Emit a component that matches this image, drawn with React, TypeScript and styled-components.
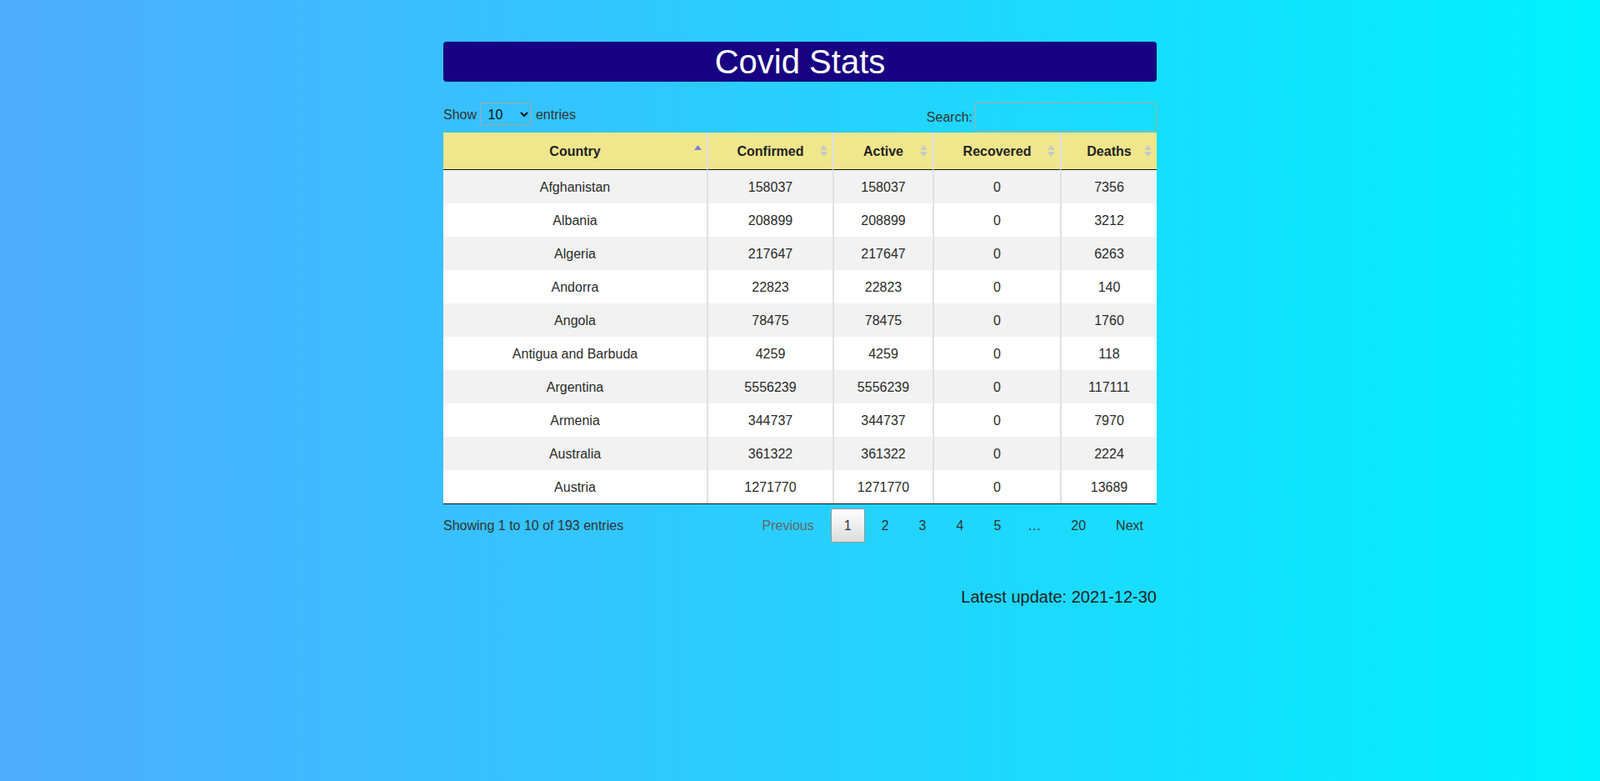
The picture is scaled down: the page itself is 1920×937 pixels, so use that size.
import React from "react";
import styled, { createGlobalStyle } from "styled-components";

interface CountryRow {
  country: string;
  confirmed: number;
  active: number;
  recovered: number;
  deaths: number;
}

const rows: CountryRow[] = [
  { country: "Afghanistan", confirmed: 158037, active: 158037, recovered: 0, deaths: 7356 },
  { country: "Albania", confirmed: 208899, active: 208899, recovered: 0, deaths: 3212 },
  { country: "Algeria", confirmed: 217647, active: 217647, recovered: 0, deaths: 6263 },
  { country: "Andorra", confirmed: 22823, active: 22823, recovered: 0, deaths: 140 },
  { country: "Angola", confirmed: 78475, active: 78475, recovered: 0, deaths: 1760 },
  { country: "Antigua and Barbuda", confirmed: 4259, active: 4259, recovered: 0, deaths: 118 },
  { country: "Argentina", confirmed: 5556239, active: 5556239, recovered: 0, deaths: 117111 },
  { country: "Armenia", confirmed: 344737, active: 344737, recovered: 0, deaths: 7970 },
  { country: "Australia", confirmed: 361322, active: 361322, recovered: 0, deaths: 2224 },
  { country: "Austria", confirmed: 1271770, active: 1271770, recovered: 0, deaths: 13689 },
];

const columns = [
  { label: "Country", width: 316, sorted: true },
  { label: "Confirmed", width: 151, sorted: false },
  { label: "Active", width: 120, sorted: false },
  { label: "Recovered", width: 153, sorted: false },
  { label: "Deaths", width: 116, sorted: false },
];

const pages = ["1", "2", "3", "4", "5", "…", "20"];

const SortIcon: React.FC<{ asc?: boolean }> = ({ asc }) => (
  <SortMark width="9" height="14" viewBox="0 0 9 14">
    {asc ? (
      <polygon points="4.5,0 9,6 0,6" fill="#7a7fd6" />
    ) : (
      <>
        <polygon points="4.5,0 9,6 0,6" fill="#c8c8c8" />
        <polygon points="0,8 9,8 4.5,14" fill="#c8c8c8" />
      </>
    )}
  </SortMark>
);

const App: React.FC = () => {
  return (
    <>
      <GlobalStyle />
      <Wrapper>
        <Title>Covid Stats</Title>
        <TopBar>
          <Label>
            Show{" "}
            <Select defaultValue="10">
              <option value="10">10</option>
              <option value="25">25</option>
              <option value="50">50</option>
              <option value="100">100</option>
            </Select>{" "}
            entries
          </Label>
          <Label>
            Search:
            <SearchInput type="search" />
          </Label>
        </TopBar>
        <Table>
          <colgroup>
            {columns.map((c) => (
              <col key={c.label} style={{ width: c.width }} />
            ))}
          </colgroup>
          <thead>
            <tr>
              {columns.map((c) => (
                <Th key={c.label}>
                  {c.label}
                  <SortIcon asc={c.sorted} />
                </Th>
              ))}
            </tr>
          </thead>
          <tbody>
            {rows.map((r, i) => (
              <Row key={r.country} odd={i % 2 === 0}>
                <Td>{r.country}</Td>
                <Td>{r.confirmed}</Td>
                <Td>{r.active}</Td>
                <Td>{r.recovered}</Td>
                <Td>{r.deaths}</Td>
              </Row>
            ))}
          </tbody>
        </Table>
        <BottomBar>
          <Info>Showing 1 to 10 of 193 entries</Info>
          <Pager>
            <PageButton disabled>Previous</PageButton>
            {pages.map((p) =>
              p === "…" ? (
                <Ellipsis key={p}>…</Ellipsis>
              ) : (
                <PageButton key={p} current={p === "1"}>
                  {p}
                </PageButton>
              )
            )}
            <PageButton>Next</PageButton>
          </Pager>
        </BottomBar>
        <Updated>Latest update: 2021-12-30</Updated>
      </Wrapper>
    </>
  );
};

export default App;

const GlobalStyle = createGlobalStyle`
  html, body {
    margin: 0;
    padding: 0;
  }
  body {
    min-height: 100vh;
    background: linear-gradient(to right, #4facfe 0%, #00f2fe 100%);
    font-family: "Liberation Sans", Arial, sans-serif;
    font-size: 16px;
    line-height: 23px;
    color: #333;
  }
`;

const Wrapper = styled.div`
  width: 856px;
  margin: 0 auto;
  padding-top: 50px;
`;

const Title = styled.h1`
  margin: 0;
  height: 48px;
  line-height: 48px;
  font-size: 40px;
  font-weight: normal;
  text-align: center;
  color: #fff;
  background-color: #170082;
  border-radius: 4px;
`;

const TopBar = styled.div`
  display: flex;
  justify-content: space-between;
  align-items: flex-start;
  margin-top: 25px;
  margin-bottom: 1px;
`;

const Label = styled.label`
  display: block;
  color: #333;
`;

const Select = styled.select`
  width: 62px;
  height: 28px;
  padding: 0 4px;
  font-family: inherit;
  font-size: 16px;
  color: #111;
  background-color: transparent;
  border: 1px solid #aaa;
  border-radius: 3px;
`;

const SearchInput = styled.input`
  box-sizing: border-box;
  width: 218px;
  height: 35px;
  margin-left: 3px;
  padding: 5px;
  font-family: inherit;
  font-size: 16px;
  background-color: transparent;
  border: 1px solid #aaa;
  border-radius: 3px;
  outline: none;
`;

const Table = styled.table`
  width: 100%;
  table-layout: fixed;
  border-collapse: separate;
  border-spacing: 0;
  border-bottom: 1px solid #111;
`;

const Th = styled.th`
  position: relative;
  padding: 11px 18px 10px;
  font-weight: bold;
  color: #222;
  text-align: center;
  background-color: #f0e68c;
  border-bottom: 1px solid #111;
  & + & {
    border-left: 2px solid #dde1e6;
  }
`;

const SortMark = styled.svg`
  position: absolute;
  right: 6px;
  top: 50%;
  margin-top: -7px;
`;

const Row = styled.tr<{ odd: boolean }>`
  background-color: ${(props) => (props.odd ? "#f2f2f2" : "#fff")};
`;

const Td = styled.td`
  padding: 9px 10px 8px;
  text-align: center;
  color: #2b2b2b;
  white-space: nowrap;
  & + & {
    border-left: 2px solid #dde1e6;
  }
`;

const BottomBar = styled.div`
  display: flex;
  justify-content: space-between;
  align-items: flex-start;
  margin-top: 5px;
`;

const Info = styled.div`
  padding-top: 9px;
  color: #333;
`;

const Pager = styled.div`
  display: flex;
  align-items: center;
`;

const PageButton = styled.span<{ current?: boolean; disabled?: boolean }>`
  display: inline-block;
  padding: 8px 15px;
  margin-left: 4px;
  border: 1px solid ${(props) => (props.current ? "#979797" : "transparent")};
  border-radius: 2px;
  color: ${(props) => (props.disabled ? "#666" : "#333")};
  background: ${(props) =>
    props.current ? "linear-gradient(to bottom, #fff 0%, #dcdcdc 100%)" : "transparent"};
  cursor: ${(props) => (props.disabled ? "default" : "pointer")};
  &:first-child {
    margin-left: 0;
  }
`;

const Ellipsis = styled.span`
  padding: 0 16px;
  color: #333;
`;

const Updated = styled.div`
  margin-top: 51px;
  font-size: 20px;
  line-height: 28px;
  text-align: right;
  color: #222;
`;
